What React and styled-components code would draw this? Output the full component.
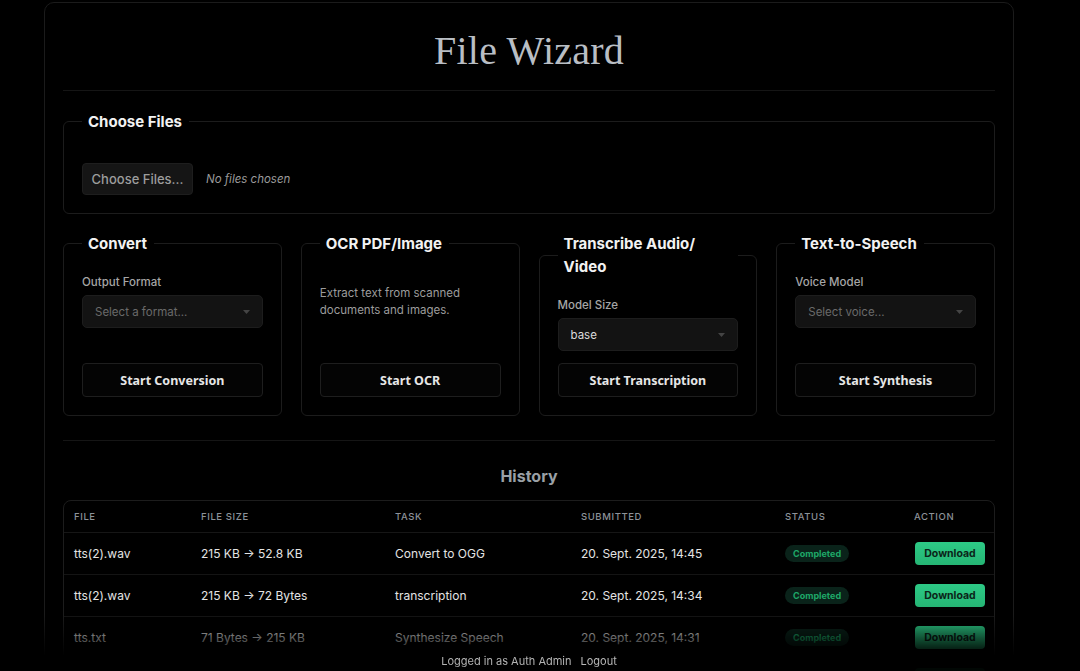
import React from "react";
import styled, { createGlobalStyle } from "styled-components";

const GlobalStyle = createGlobalStyle`
  html, body {
    margin: 0;
    padding: 0;
    background: #000;
  }
  body {
    font-family: Inter, "Noto Sans", sans-serif;
    color: #e5e5e5;
  }
`;

const history = [
  { file: "tts(2).wav", size: "215 KB → 52.8 KB", task: "Convert to OGG", date: "20. Sept. 2025, 14:45" },
  { file: "tts(2).wav", size: "215 KB → 72 Bytes", task: "transcription", date: "20. Sept. 2025, 14:34" },
  { file: "tts.txt", size: "71 Bytes → 215 KB", task: "Synthesize Speech", date: "20. Sept. 2025, 14:31" },
  { file: "scan.pdf", size: "1.2 MB → 4 KB", task: "OCR", date: "20. Sept. 2025, 14:20" },
  { file: "notes.docx", size: "38 KB → 41 KB", task: "Convert to PDF", date: "20. Sept. 2025, 14:02" },
];

const App = () => {
  return (
    <>
      <GlobalStyle />
      <Page>
        <Header>
          <Title>File Wizard</Title>
        </Header>

        <Panel>
          <Legend>Choose Files</Legend>
          <FileRow>
            <FileButton>Choose Files...</FileButton>
            <FileHint>No files chosen</FileHint>
          </FileRow>
        </Panel>

        <Cards>
          <Card>
            <Legend>Convert</Legend>
            <Label>Output Format</Label>
            <Select placeholder>
              Select a format...
              <Caret />
            </Select>
            <Action>Start Conversion</Action>
          </Card>
          <Card>
            <Legend>OCR PDF/Image</Legend>
            <Description>Extract text from scanned documents and images.</Description>
            <Action>Start OCR</Action>
          </Card>
          <Card>
            <Legend>
              Transcribe Audio/<wbr />Video
            </Legend>
            <Label>Model Size</Label>
            <Select>
              base
              <Caret />
            </Select>
            <Action>Start Transcription</Action>
          </Card>
          <Card>
            <Legend>Text-to-Speech</Legend>
            <Label>Voice Model</Label>
            <Select placeholder>
              Select voice...
              <Caret />
            </Select>
            <Action>Start Synthesis</Action>
          </Card>
        </Cards>

        <HistorySection>
          <HistoryTitle>History</HistoryTitle>
          <TableWrap>
            <Table>
              <colgroup>
                <col style={{ width: 127 }} />
                <col style={{ width: 194 }} />
                <col style={{ width: 186 }} />
                <col style={{ width: 204 }} />
                <col style={{ width: 129 }} />
                <col />
              </colgroup>
              <thead>
                <tr>
                  <Th>File</Th>
                  <Th>File Size</Th>
                  <Th>Task</Th>
                  <Th>Submitted</Th>
                  <Th>Status</Th>
                  <Th>Action</Th>
                </tr>
              </thead>
              <tbody>
                {history.map((row, i) => (
                  <Tr key={i}>
                    <Td>{row.file}</Td>
                    <Td>{row.size}</Td>
                    <Td>{row.task}</Td>
                    <Td>{row.date}</Td>
                    <Td>
                      <Badge>Completed</Badge>
                    </Td>
                    <Td>
                      <Download>Download</Download>
                    </Td>
                  </Tr>
                ))}
              </tbody>
            </Table>
          </TableWrap>
        </HistorySection>
      </Page>

      <Footer>
        <span>Logged in as Auth Admin</span>
        <FooterLink>Logout</FooterLink>
      </Footer>
    </>
  );
};

export default App;

const Caret = () => (
  <CaretSvg width="7" height="4" viewBox="0 0 7 4">
    <path d="M0 0h7L3.5 4z" fill="currentColor" />
  </CaretSvg>
);

export const Page = styled.main`
  width: 970px;
  box-sizing: border-box;
  margin: 2px 0 0 44px;
  padding: 0 18px 40px;
  border: 1px solid #1b1b1b;
  border-radius: 10px;
`;

export const Header = styled.header`
  padding: 24px 0 15px;
  border-bottom: 1px solid #151515;
`;

export const Title = styled.h1`
  margin: 0;
  text-align: center;
  font-family: "Liberation Serif", "DejaVu Serif", serif;
  font-weight: 300;
  font-size: 40px;
  line-height: 48px;
  color: #b9bec4;
  letter-spacing: 0.2px;
`;

export const Panel = styled.fieldset`
  margin: 19px 0 0;
  padding: 0 18px 18px;
  border: 1px solid #1c1c1c;
  border-radius: 6px;
  min-width: 0;
`;

export const Legend = styled.legend`
  margin-left: 0;
  padding: 0 7px 0 6px;
  font-size: 15px;
  line-height: 23px;
  font-weight: 700;
  color: #f2f2f2;
`;

export const FileRow = styled.div`
  display: flex;
  align-items: center;
  gap: 13px;
  margin-top: 30px;
`;

export const FileButton = styled.button`
  height: 32px;
  width: 111px;
  padding: 0;
  background: #151515;
  border: 1px solid #1e1e1e;
  border-radius: 4px;
  color: #9d9d9d;
  font-family: Inter, sans-serif;
  font-size: 13px;
  font-weight: 500;
`;

export const FileHint = styled.span`
  font-size: 11.5px;
  font-style: italic;
  color: #9b9b9b;
`;

export const Cards = styled.div`
  display: grid;
  grid-template-columns: repeat(4, 1fr);
  gap: 19px;
  margin-top: 18px;
  align-items: stretch;
`;

export const Card = styled.fieldset`
  display: flex;
  flex-direction: column;
  margin: 0;
  padding: 19px 18px 18px;
  border: 1px solid #1c1c1c;
  border-radius: 6px;
  min-width: 0;
`;

export const Label = styled.label`
  font-size: 11.5px;
  line-height: 16px;
  font-weight: 500;
  color: #a6a6a6;
  margin-bottom: 5px;
`;

export const Select = styled.div`
  display: flex;
  align-items: center;
  justify-content: space-between;
  flex-shrink: 0;
  height: 33px;
  box-sizing: border-box;
  margin-bottom: 12px;
  padding: 0 12px 0 12px;
  background: #131313;
  border: 1px solid #1d1d1d;
  border-radius: 5px;
  font-size: 11.5px;
  color: ${(p) => (p.placeholder ? "#6a6a6a" : "#dcdcdc")};
`;

export const CaretSvg = styled.svg`
  color: #444;
`;

export const Description = styled.p`
  margin: 11px 0 12px;
  font-size: 11.5px;
  line-height: 17px;
  color: #9c9c9c;
`;

export const Action = styled.button`
  margin-top: auto;
  height: 34px;
  width: 100%;
  flex-shrink: 0;
  background: #040404;
  border: 1px solid #1e1e1e;
  border-radius: 4px;
  color: #e6e6e6;
  font-family: "Noto Sans", "Open Sans", sans-serif;
  font-size: 12.5px;
  font-weight: 700;
  cursor: pointer;
`;

export const HistorySection = styled.section`
  margin-top: 24px;
  border-top: 1px solid #151515;
`;

export const HistoryTitle = styled.h2`
  margin: 23px 0 12px;
  text-align: center;
  font-size: 16px;
  line-height: 24px;
  font-weight: 700;
  color: #9aa0a6;
`;

export const TableWrap = styled.div`
  border: 1px solid #1c1c1c;
  border-radius: 8px;
  overflow: hidden;
`;

export const Table = styled.table`
  width: 100%;
  table-layout: fixed;
  border-collapse: collapse;
`;

export const Th = styled.th`
  height: 31px;
  padding: 0 10px;
  text-align: left;
  font-size: 9.5px;
  font-weight: 500;
  letter-spacing: 0.6px;
  text-transform: uppercase;
  color: #8d9299;
  border-bottom: 1px solid #161616;
`;

export const Tr = styled.tr`
  border-bottom: 1px solid #141414;
`;

export const Td = styled.td`
  height: 41px;
  padding: 0 10px;
  font-size: 12px;
  color: #e4e4e4;
  white-space: nowrap;
`;

export const Badge = styled.span`
  display: inline-block;
  padding: 0 8px;
  height: 17px;
  line-height: 17px;
  border-radius: 9px;
  background: #0a231a;
  color: #1ea868;
  font-size: 9px;
  font-weight: 700;
`;

export const Download = styled.button`
  width: 70px;
  height: 23px;
  margin-left: 1px;
  padding: 0;
  border: none;
  border-radius: 4px;
  background: linear-gradient(#2dca86, #25b574);
  color: #0b2418;
  font-family: Inter, sans-serif;
  font-size: 10.5px;
  font-weight: 700;
`;

export const Footer = styled.footer`
  position: fixed;
  left: 44px;
  bottom: 0;
  width: 970px;
  height: 56px;
  box-sizing: border-box;
  padding-bottom: 2px;
  display: flex;
  align-items: flex-end;
  justify-content: center;
  gap: 9px;
  font-size: 11px;
  line-height: 16px;
  color: #b3b3b3;
  background: linear-gradient(
    rgba(0, 0, 0, 0) 0%,
    rgba(0, 0, 0, 0.55) 40%,
    rgba(0, 0, 0, 0.97) 72%
  );
`;

export const FooterLink = styled.a`
  color: #b8b8b8;
  cursor: pointer;
`;
